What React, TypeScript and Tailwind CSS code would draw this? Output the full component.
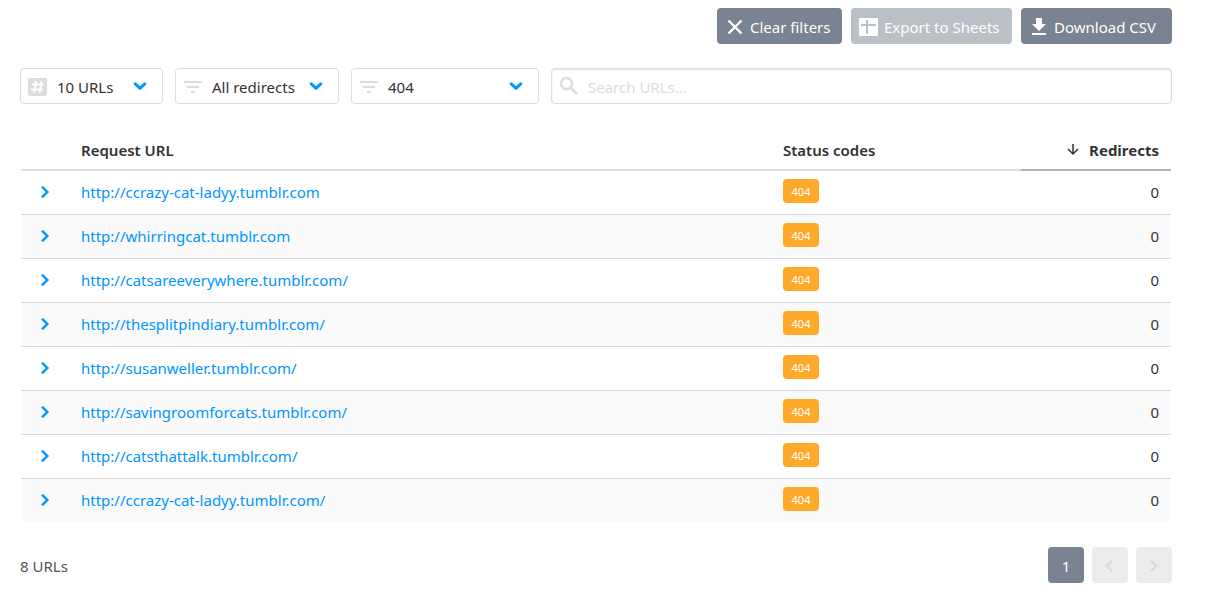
import React, { useState } from "react";

interface IconProps {
  className?: string;
  children: React.ReactNode;
}

const Icon: React.FC<IconProps> = ({ className = "", children }) => (
  <svg
    viewBox="0 0 24 24"
    fill="currentColor"
    aria-hidden="true"
    className={`w-6 h-6 shrink-0 ${className}`}
  >
    {children}
  </svg>
);

const CloseIcon = () => (
  <Icon>
    <path
      d="M5.500 5.500l13 13M18.500 5.500l-13 13"
      fill="none"
      stroke="currentColor"
      strokeWidth="2.400"
    />
  </Icon>
);

const SheetIcon = () => (
  <Icon>
    <path
      fillRule="evenodd"
      d="M3 3h17a1 1 0 0 1 1 1v16a1 1 0 0 1-1 1H3a1 1 0 0 1-1-1V4a1 1 0 0 1 1-1zM9 5v4H4v2h5v8h2v-8h8V9h-8V5z"
    />
  </Icon>
);

const DownloadIcon = () => (
  <Icon>
    <path d="M15 9V3H9v6H5l7 7 7-7zM5 18v2h14v-2z" />
  </Icon>
);

const HashIcon = () => (
  <Icon>
    <rect x="2" y="3" width="19" height="18" rx="2" />
    <path
      d="M10 6l-2 12M15.500 6l-2 12M6 9.500h12M5 14.500h12"
      stroke="white"
      strokeWidth="1.800"
      fill="none"
    />
  </Icon>
);

const FilterIcon = () => (
  <Icon>
    <path d="M10 18h4v-2h-4v2zM3 6v2h18V6H3zm3 7h12v-2H6v2z" />
  </Icon>
);

const SearchIcon = () => (
  <Icon>
    <path
      d="M15.500 14h-.79l-.28-.27A6.471 6.471 0 0 0 16 9.500 6.500 6.500 0 1 0 9.500 16c1.610 0 3.090-.59 4.230-1.570l.27.28v.79l5 4.990L20.490 19l-4.990-5zm-6 0C7.010 14 5 11.990 5 9.500S7.010 5 9.500 5 14 7.010 14 9.500 11.990 14 9.500 14z"
      stroke="currentColor"
      strokeWidth="0.600"
    />
  </Icon>
);

const ChevronDown = () => (
  <Icon>
    <path
      d="M7.200 9.800l4.800 4.500 4.800-4.500"
      fill="none"
      stroke="currentColor"
      strokeWidth="3"
      strokeLinecap="round"
    />
  </Icon>
);

const ChevronRight = () => (
  <Icon>
    <path
      d="M8.300 7.400L9.800 6l6 6-6 6-1.500-1.400 4.600-4.600z"
      stroke="currentColor"
      strokeWidth="0.400"
    />
  </Icon>
);

const ChevronLeft = () => (
  <Icon>
    <path
      d="M15 7.400L13.500 6l-6 6 6 6 1.500-1.400-4.600-4.600z"
      stroke="currentColor"
      strokeWidth="0.400"
    />
  </Icon>
);

interface FilterSelectProps {
  label: string;
  icon: React.ReactNode;
  options: string[];
  className: string;
}

const FilterSelect: React.FC<FilterSelectProps> = ({
  label,
  icon,
  options,
  className,
}) => (
  <div className={`relative ${className}`}>
    <select
      aria-label={label}
      className="appearance-none w-full h-9 pt-0.5 pl-9 pr-9 bg-white border border-[#dcdcdc] rounded cursor-pointer"
    >
      {options.map((option) => (
        <option key={option}>{option}</option>
      ))}
    </select>
    <span className="absolute left-1.5 inset-y-0 pt-0.5 flex items-center text-[#dcdcdc] pointer-events-none">
      {icon}
    </span>
    <span className="absolute right-[11px] inset-y-0 flex items-center text-[#0095ff] pointer-events-none">
      <ChevronDown />
    </span>
  </div>
);

const rows = [
  { url: "http://ccrazy-cat-ladyy.tumblr.com", status: 404, redirects: 0 },
  { url: "http://whirringcat.tumblr.com", status: 404, redirects: 0 },
  { url: "http://catsareeverywhere.tumblr.com/", status: 404, redirects: 0 },
  { url: "http://thesplitpindiary.tumblr.com/", status: 404, redirects: 0 },
  { url: "http://susanweller.tumblr.com/", status: 404, redirects: 0 },
  { url: "http://savingroomforcats.tumblr.com/", status: 404, redirects: 0 },
  { url: "http://catsthattalk.tumblr.com/", status: 404, redirects: 0 },
  { url: "http://ccrazy-cat-ladyy.tumblr.com/", status: 404, redirects: 0 },
];

const actionButton =
  "flex items-center gap-[3px] h-9 pt-0.5 pl-1.5 rounded bg-[#798391] text-white whitespace-nowrap";
const pageButton = "flex items-center justify-center w-9 h-9 pt-0.5 rounded";

const App: React.FC = () => {
  const [query, setQuery] = useState("");

  return (
    <main className="pl-5 pr-[37px] pt-2 pb-2 bg-white text-[#333333] text-[15px] leading-6 font-['Noto_Sans',sans-serif]">
      {/* Actions */}
      <div className="flex justify-end gap-[9px]">
        <button type="button" className={`${actionButton} w-[125px]`}>
          <CloseIcon />
          Clear filters
        </button>
        <button
          type="button"
          disabled
          className={`${actionButton} w-[161px] opacity-50`}
        >
          <SheetIcon />
          Export to Sheets
        </button>
        <button type="button" className={`${actionButton} w-[151px]`}>
          <DownloadIcon />
          Download CSV
        </button>
      </div>

      {/* Filters */}
      <div className="flex gap-3 mt-6">
        <FilterSelect
          label="URLs per page"
          icon={<HashIcon />}
          options={["10 URLs", "25 URLs", "50 URLs"]}
          className="w-[143px]"
        />
        <FilterSelect
          label="Redirects"
          icon={<FilterIcon />}
          options={["All redirects", "No redirects"]}
          className="w-[164px]"
        />
        <FilterSelect
          label="Status code"
          icon={<FilterIcon />}
          options={["404", "301", "200"]}
          className="w-[188px]"
        />
        <div className="relative flex-1">
          <input
            type="text"
            aria-label="Search URLs"
            placeholder="Search URLs..."
            value={query}
            onChange={(e) => setQuery(e.target.value)}
            className="w-full h-9 pt-0.5 pl-9 pr-3 border border-[#dcdcdc] rounded shadow-[inset_0_1px_2px_rgba(0,0,0,0.12)] placeholder:text-[#dcdcdc]"
          />
          <span className="absolute left-1.5 inset-y-0 flex items-center text-[#dcdcdc] pointer-events-none">
            <SearchIcon />
          </span>
        </div>
      </div>

      {/* Results */}
      <div className="mt-6 px-px">
        <table className="w-full table-fixed border-collapse">
          <thead>
            <tr className="h-[42px] text-left">
              <th className="w-12 border-b-2 border-[#dcdcdc]" />
              <th className="px-3 pt-0.5 font-semibold border-b-2 border-[#dcdcdc]">
                Request URL
              </th>
              <th className="w-[250px] px-3 pt-0.5 font-semibold border-b-2 border-[#dcdcdc]">
                Status codes
              </th>
              <th className="w-[150px] px-3 pt-0.5 font-bold border-b-2 border-[#b4b4b4]">
                <button
                  type="button"
                  className="flex items-center gap-1 ml-auto"
                >
                  <Icon>
                    <path
                      d="M12 6v10M7 11l5 5 5-5"
                      fill="none"
                      stroke="currentColor"
                      strokeWidth="1.500"
                    />
                  </Icon>
                  Redirects
                </button>
              </th>
            </tr>
          </thead>
          <tbody>
            {rows.map((row) => (
              <tr
                key={row.url}
                className="h-11 border-b border-[#dcdcdc] last:border-b-0 even:bg-[#fafafa]"
              >
                <td>
                  <button
                    type="button"
                    aria-label={`Expand ${row.url}`}
                    className="flex mx-auto text-[#0095ff]"
                  >
                    <ChevronRight />
                  </button>
                </td>
                <td className="px-3">
                  <a href={row.url} className="text-[#0095ff]">
                    {row.url}
                  </a>
                </td>
                <td className="px-3 pb-0.5">
                  <span className="flex items-center justify-center w-9 h-6 pt-0.5 rounded bg-[#ffa92b] text-white text-[11px]">
                    {row.status}
                  </span>
                </td>
                <td className="px-3 text-right">{row.redirects}</td>
              </tr>
            ))}
          </tbody>
        </table>
      </div>

      {/* Pagination */}
      <div className="flex items-center justify-between mt-[25px]">
        <span className="pt-0.5 text-[#555555]">{rows.length} URLs</span>
        <nav aria-label="Pagination" className="flex gap-2">
          <button
            type="button"
            aria-current="page"
            className={`${pageButton} bg-[#798391] text-white`}
          >
            1
          </button>
          <button
            type="button"
            disabled
            aria-label="Previous page"
            className={`${pageButton} bg-[#ececec] text-[#dadada]`}
          >
            <ChevronLeft />
          </button>
          <button
            type="button"
            disabled
            aria-label="Next page"
            className={`${pageButton} bg-[#ececec] text-[#dadada]`}
          >
            <ChevronRight />
          </button>
        </nav>
      </div>
    </main>
  );
};

export default App;
